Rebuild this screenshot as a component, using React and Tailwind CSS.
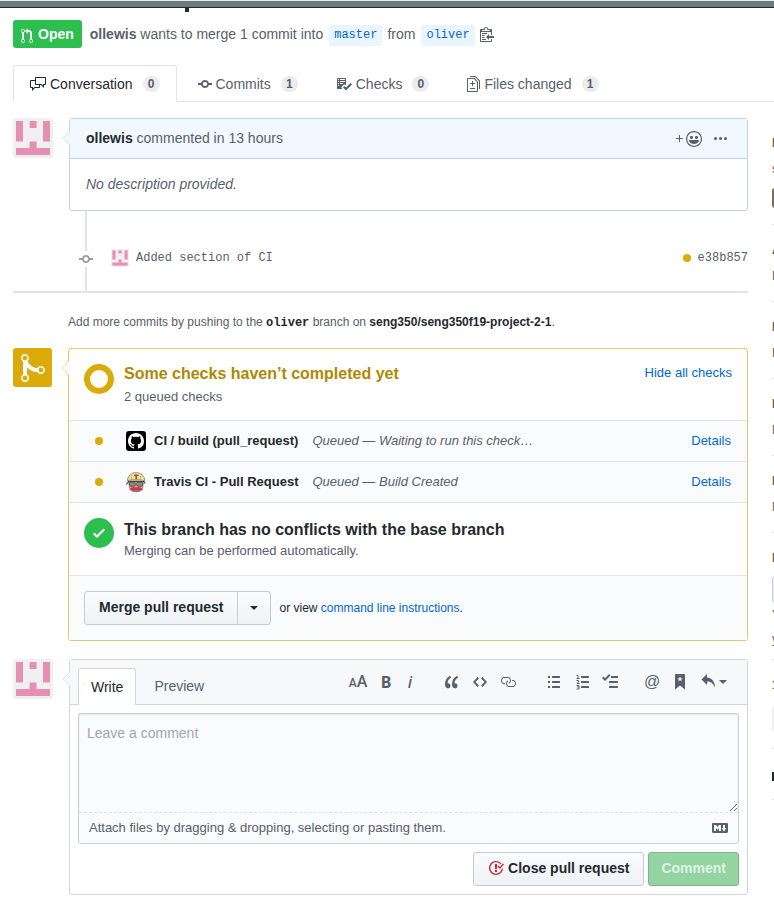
import React from "react";

const PATHS = {
  pullRequest: { w: 12, d: "M11 11.28V5c-.03-.78-.34-1.47-.94-2.06C9.46 2.35 8.78 2.03 8 2H7V0L4 3l3 3V4h1c.27.02.48.11.69.31.21.2.3.42.31.69v6.28A1.993 1.993 0 0 0 10 15a1.993 1.993 0 0 0 1-3.72zm-1 2.92c-.66 0-1.2-.55-1.2-1.2 0-.65.55-1.2 1.2-1.2.65 0 1.2.55 1.2 1.2 0 .65-.55 1.2-1.2 1.2zM4 3c0-1.11-.89-2-2-2a1.993 1.993 0 0 0-1 3.72v6.56A1.993 1.993 0 0 0 2 15a1.993 1.993 0 0 0 1-3.72V4.72c.59-.34 1-.98 1-1.72zm-.8 10c0 .66-.55 1.2-1.2 1.2-.65 0-1.2-.55-1.2-1.2 0-.65.55-1.2 1.2-1.2.65 0 1.2.55 1.2 1.2zM2 4.2C1.34 4.2.8 3.65.8 3c0-.65.55-1.2 1.2-1.2.65 0 1.2.55 1.2 1.2 0 .65-.55 1.2-1.2 1.2z" },
  commit: { w: 14, d: "M10.86 7c-.45-1.72-2-3-3.86-3-1.86 0-3.41 1.28-3.86 3H0v2h3.14c.45 1.72 2 3 3.86 3 1.86 0 3.41-1.28 3.86-3H14V7h-3.14zM7 10.2c-1.22 0-2.2-.98-2.2-2.2 0-1.22.98-2.2 2.2-2.2 1.22 0 2.2.98 2.2 2.2 0 1.22-.98 2.2-2.2 2.2z" },
  discussion: { w: 16, d: "M15 1H6c-.55 0-1 .45-1 1v2H1c-.55 0-1 .45-1 1v6c0 .55.45 1 1 1h1v3l3-3h4c.55 0 1-.45 1-1V9h1l3 3V9h1c.55 0 1-.45 1-1V2c0-.55-.45-1-1-1zM9 11H4.5L3 12.5V11H1V5h4v3c0 .55.45 1 1 1h3v2zm6-3h-2v1.5L11.5 8H6V2h9v6z" },
  checklist: { w: 16, d: "M16 8.5l-6 6-3-3L8.5 10l1.5 1.5L14.5 7 16 8.5zM5.7 12.2l.8.8H2c-.55 0-1-.45-1-1V3c0-.55.45-1 1-1h7c.55 0 1 .45 1 1v6.5l-.8-.8c-.39-.39-1.03-.39-1.42 0L5.7 10.8a.996.996 0 0 0 0 1.41v-.01zM4 4h5V3H4v1zm0 2h5V5H4v1zm0 2h3V7H4v1zM3 9H2v1h1V9zm0-2H2v1h1V7zm0-2H2v1h1V5zm0-2H2v1h1V3z" },
  diff: { w: 13, d: "M6 7h2v1H6v2H5V8H3V7h2V5h1v2zm-3 6h5v-1H3v1zM7.5 2L11 5.5V15c0 .55-.45 1-1 1H1c-.55 0-1-.45-1-1V3c0-.55.45-1 1-1h6.5zM10 6L7 3H1v12h9V6zM8.5 0H3v1h5l4 4v8h1V4.5L8.5 0z" },
  clippy: { w: 14, d: "M2 13h4v1H2v-1zm5-6H2v1h5V7zm2 3V8l-3 3 3 3v-2h5v-2H9zM4.5 9H2v1h2.5V9zM2 12h2.5v-1H2v1zm9 1h1v2c-.02.28-.11.52-.3.7-.19.18-.42.28-.7.3H1c-.55 0-1-.45-1-1V4c0-.55.45-1 1-1h3c0-1.11.89-2 2-2 1.11 0 2 .89 2 2h3c.55 0 1 .45 1 1v5h-1V6H1v9h10v-2zM2 5h8c0-.55-.45-1-1-1H8c-.55 0-1-.45-1-1s-.45-1-1-1-1 .45-1 1-.45 1-1 1H3c-.55 0-1 .45-1 1z" },
  plus: { w: 7, d: "M4 4H3v3H0v1h3v3h1V8h3V7H4V4z" },
  smiley: { w: 16, d: "M8 0C3.58 0 0 3.58 0 8s3.58 8 8 8 8-3.58 8-8-3.58-8-8-8zm4.81 12.81a6.72 6.72 0 0 1-2.17 1.45c-.83.36-1.72.53-2.64.53-.92 0-1.81-.17-2.64-.53-.81-.34-1.55-.83-2.17-1.45a6.773 6.773 0 0 1-1.45-2.17A6.59 6.59 0 0 1 1.21 8c0-.92.17-1.81.53-2.64.34-.81.83-1.55 1.45-2.17.62-.62 1.36-1.11 2.17-1.45A6.59 6.59 0 0 1 8 1.21c.92 0 1.81.17 2.64.53.81.34 1.55.83 2.17 1.45.62.62 1.11 1.36 1.45 2.17.36.83.53 1.72.53 2.64 0 .92-.17 1.81-.53 2.64-.34.81-.83 1.55-1.45 2.17zM4 6.8v-.59c0-.66.53-1.19 1.2-1.19h.59c.66 0 1.19.53 1.19 1.19v.59c0 .67-.53 1.2-1.19 1.2H5.2C4.53 8 4 7.47 4 6.8zm5 0v-.59c0-.66.53-1.19 1.2-1.19h.59c.66 0 1.19.53 1.19 1.19v.59c0 .67-.53 1.2-1.19 1.2h-.59C9.53 8 9 7.47 9 6.8zm4 3.2c-.72 1.88-2.91 3-5 3s-4.28-1.13-5-3c-.14-.39.23-1 .66-1h8.59c.41 0 .89.61.75 1z" },
  kebab: { w: 13, d: "M1.5 9a1.5 1.5 0 1 0 0-3 1.5 1.5 0 0 0 0 3zm5 0a1.5 1.5 0 1 0 0-3 1.5 1.5 0 0 0 0 3zM13 7.5a1.5 1.5 0 1 1-3 0 1.5 1.5 0 0 1 3 0z" },
  merge: { w: 12, d: "M10 7c-.73 0-1.38.41-1.73 1.02V8C7.22 7.98 6 7.64 5.14 6.98c-.75-.58-1.5-1.61-1.89-2.44A1.993 1.993 0 0 0 2 .99C.89.99 0 1.89 0 3a2 2 0 0 0 1 1.72v6.56c-.59.35-1 .99-1 1.72 0 1.11.89 2 2 2a1.993 1.993 0 0 0 1-3.72V7.67c.67.7 1.44 1.27 2.3 1.69.86.42 2.03.63 2.97.64v-.02c.36.61 1 1.02 1.73 1.02 1.11 0 2-.89 2-2 0-1.11-.89-2-2-2zm-6.8 6c0 .66-.55 1.2-1.2 1.2-.65 0-1.2-.55-1.2-1.2 0-.65.55-1.2 1.2-1.2.65 0 1.2.55 1.2 1.2zM2 4.2C1.34 4.2.8 3.65.8 3c0-.65.55-1.2 1.2-1.2.65 0 1.2.55 1.2 1.2 0 .65-.55 1.2-1.2 1.2zm8 6c-.66 0-1.2-.55-1.2-1.2 0-.65.55-1.2 1.2-1.2.65 0 1.2.55 1.2 1.2 0 .65-.55 1.2-1.2 1.2z" },
  check: { w: 12, d: "M12 5l-8 8-4-4 1.5-1.5L4 10l6.5-6.5L12 5z" },
  github: { w: 16, d: "M8 0C3.58 0 0 3.58 0 8c0 3.54 2.29 6.53 5.47 7.59.4.07.55-.17.55-.38 0-.19-.01-.82-.01-1.49-2.01.37-2.53-.49-2.69-.94-.09-.23-.48-.94-.82-1.13-.28-.15-.68-.52-.01-.53.63-.01 1.08.58 1.23.82.72 1.21 1.87.87 2.33.66.07-.52.28-.87.51-1.07-1.78-.2-3.64-.89-3.64-3.95 0-.87.31-1.59.82-2.15-.08-.2-.36-1.02.08-2.12 0 0 .67-.21 2.2.82.64-.18 1.32-.27 2-.27.68 0 1.36.09 2 .27 1.53-1.04 2.2-.82 2.2-.82.44 1.1.16 1.92.08 2.12.51.56.82 1.27.82 2.15 0 3.07-1.87 3.75-3.65 3.95.29.25.54.73.54 1.48 0 1.07-.01 1.93-.01 2.2 0 .21.15.46.55.38A8.013 8.013 0 0 0 16 8c0-4.42-3.58-8-8-8z" },
  quote: { w: 14, d: "M6.16 3.5C3.73 5.06 2.55 6.67 2.55 9.36c.16-.05.3-.05.44-.05 1.27 0 2.5.86 2.5 2.41 0 1.61-1.03 2.61-2.5 2.61-1.9 0-2.99-1.52-2.99-4.25 0-3.8 1.75-6.53 5.02-8.42L6.16 3.5zm7 0c-2.43 1.56-3.61 3.17-3.61 5.86.16-.05.3-.05.44-.05 1.27 0 2.5.86 2.5 2.41 0 1.61-1.03 2.61-2.5 2.61-1.89 0-2.98-1.52-2.98-4.25 0-3.8 1.75-6.53 5.02-8.42l1.14 1.84h-.01z" },
  code: { w: 14, d: "M9.5 3L8 4.5 11.5 8 8 11.5 9.5 13 14 8 9.5 3zm-5 0L0 8l4.5 5L6 11.5 2.5 8 6 4.5 4.5 3z" },
  link: { w: 16, d: "M4 9h1v1H4c-1.5 0-3-1.69-3-3.5S2.55 3 4 3h4c1.45 0 3 1.69 3 3.5 0 1.41-.91 2.72-2 3.25V8.59c.58-.45 1-1.27 1-2.09C10 5.22 8.98 4 8 4H4c-.98 0-2 1.22-2 2.5S3 9 4 9zm9-3h-1v1h1c1 0 2 1.22 2 2.5S13.98 12 13 12H9c-.98 0-2-1.22-2-2.5 0-.83.42-1.64 1-2.09V6.25c-1.09.53-2 1.84-2 3.25C6 11.31 7.55 13 9 13h4c1.45 0 3-1.69 3-3.5S14.5 6 13 6z" },
  list: { w: 12, d: "M0 2h2v2H0zM0 7h2v2H0zM0 12h2v2H0zM4.5 2h7q.5 0 .5.5v1q0 .5-.5.5h-7q-.5 0-.5-.5v-1q0-.5.5-.5zM4.5 7h7q.5 0 .5.5v1q0 .5-.5.5h-7q-.5 0-.5-.5v-1q0-.5.5-.5zM4.5 12h7q.5 0 .5.5v1q0 .5-.5.5h-7q-.5 0-.5-.5v-1q0-.5.5-.5z" },
  tasklist: { w: 16, d: "M15.41 9H7.59C7 9 7 8.59 7 8c0-.59 0-1 .59-1h7.81c.59 0 .59.41.59 1 0 .59 0 1-.59 1h.01zM9.59 4C9 4 9 3.59 9 3c0-.59 0-1 .59-1h5.81c.59 0 .59.41.59 1 0 .59 0 1-.59 1H9.59zM0 3.91l1.41-1.3L3 4.2 7.09 0 8.5 1.41 3 6.91l-3-3zM7.59 12h7.81c.59 0 .59.41.59 1 0 .59 0 1-.59 1H7.59C7 14 7 13.59 7 13c0-.59 0-1 .59-1z" },
  saved: { w: 10, d: "M.5 0h9q.5 0 .5.5V15.5L5 11.5 0 15.5V.5Q0 0 .5 0zM5 2.2L4.3 4.2H2.2L3.900 5.400 3.200 7.500 5 6.200l1.800 1.300-.7-2.100 1.700-1.200H5.700z" },
  reply: { w: 14, d: "M6 3.5c3.92.44 8 3.125 8 10-2.312-5.062-4.75-6-8-6V11L.5 5.5 6 0v3.5z" },
  closed: { w: 16, d: "M7 10h2v2H7v-2zm2-6H7v5h2V4zm1.5 1.5l-1 1L12 9l4-4.5-1-1L12 7l-1.5-1.5zM8 13.7A5.71 5.71 0 0 1 2.3 8c0-3.14 2.56-5.7 5.7-5.7 1.83 0 3.45.88 4.5 2.2l.92-.92A6.947 6.947 0 0 0 8 1C4.14 1 1 4.14 1 8s3.14 7 7 7 7-3.14 7-7l-1.52 1.52c-.66 2.41-2.86 4.19-5.48 4.19v-.01z" },
  markdown: { w: 16, d: "M14.85 3H1.15C.52 3 0 3.52 0 4.15v7.69C0 12.48.52 13 1.15 13h13.69c.64 0 1.15-.52 1.15-1.15v-7.7C16 3.52 15.48 3 14.85 3zM9 11H7V8L5.5 9.92 4 8v3H2V5h2l1.5 2L7 5h2v6zm2.99.5L9.5 8H11V5h2v3h1.5l-2.51 3.5z" },
};

function Octicon({ name, size = 16, className = "" }) {
  const { w, d } = PATHS[name];
  return (
    <svg width={(w * size) / 16} height={size} viewBox={`0 0 ${w} 16`} fill="currentColor" fillRule="evenodd" aria-hidden="true" className={`shrink-0 ${className}`}>
      <path d={d} />
    </svg>
  );
}

function Identicon({ size = 40 }) {
  return (
    <svg width={size} height={size} viewBox="0 0 40 40" className="shrink-0" role="img" aria-label="ollewis">
      <rect width="40" height="40" rx="3" fill="#f0f0f0" />
      <g fill="#e690b1">
        <rect x="3" y="3" width="7" height="20.5" />
        <rect x="16.600" y="3" width="7" height="7" />
        <rect x="30" y="3" width="7" height="20.5" />
        <rect x="16.600" y="23.5" width="7" height="7" />
        <rect x="3" y="30" width="34" height="7" />
      </g>
    </svg>
  );
}

function TravisAvatar() {
  return (
    <svg width="20" height="20" viewBox="0 0 20 20" className="shrink-0" aria-hidden="true">
      <path d="M2.500 9h15l-.8 7-3 3.500H6.500L3.500 16z" fill="#cdb598" stroke="#6d5b4c" strokeWidth=".6" />
      <path d="M1.500 8.800C1.500 4 5.500 .6 10 .6s8.800 3.400 8.800 8.200l-3.500-.9H5z" fill="#efe3a4" stroke="#7b7048" strokeWidth=".7" />
      <path d="M5 3.500l1 4M15 3.500l-1 4" stroke="#b5a970" strokeWidth=".8" />
      <path d="M8 2.500h4.500v1.600h-1.400v3.200H9.400V4.100H8z" fill="#a8433d" />
      <path d="M.5 12.500L2.500 9.500h15.500l1.200 2" fill="none" stroke="#4a4440" strokeWidth="1.100" />
      <rect x="3.500" y="10" width="5.800" height="4.200" rx="1.500" fill="#948878" stroke="#4a4440" strokeWidth=".8" />
      <rect x="10.700" y="10" width="6" height="4.200" rx="1.500" fill="#948878" stroke="#4a4440" strokeWidth=".8" />
      <path d="M3.500 18c1-2.800 3.500-3.600 6.500-2.600 3-1 5.800-.2 7 2.600-2 1-4.500.8-7 0-2.500.8-4.500 1-6.500 0z" fill="#d93446" />
      <path d="M7 18.200h6l-.8 1.600H7.800z" fill="#77706a" />
    </svg>
  );
}

function Pointer({ fill, stroke }) {
  return (
    <svg width="8" height="14" viewBox="0 0 8 14" className="absolute -left-2 top-3" aria-hidden="true">
      <path d="M8 0L1 7l7 7" fill={fill} stroke={stroke} />
    </svg>
  );
}

function Caret() {
  return (
    <svg width="8" height="4" viewBox="0 0 8 4" fill="currentColor" className="shrink-0" aria-hidden="true">
      <path d="M0 0h8L4 4z" />
    </svg>
  );
}

function Counter({ children }) {
  return <span className="ml-[10px] flex h-4 w-[17px] items-center justify-center rounded-full bg-[#ebecee] text-xs font-bold text-[#586069]">{children}</span>;
}

function Tab({ icon, label, count, active }) {
  return (
    <a
      href="#"
      aria-current={active ? "page" : undefined}
      className={`-mb-px flex h-[37px] items-center border px-4 pt-px ${active ? "rounded-t-[3px] border-[#e1e4e8] border-b-white bg-white text-[#24292e]" : "border-transparent text-[#586069]"}`}
    >
      <Octicon name={icon} />
      <span className="ml-1">{label}</span>
      <Counter>{count}</Counter>
    </a>
  );
}

function Branch({ children }) {
  return <a href="#" className="ml-[6px] mr-[5px] mt-0.5 rounded-[3px] bg-[#eaf5ff] px-[5px] py-0.5 font-['Liberation_Mono',monospace] text-xs leading-[17px] text-[#0366d6]">{children}</a>;
}

function StatusRow({ avatar, name, status }) {
  return (
    <li className="flex h-[41px] items-center border-t border-[#e1e4e8] bg-[#fafbfc] pl-[26px] pr-4 text-[13px]">
      <span className="mr-[23px] size-2 rounded-full bg-[#dbab09]" />
      {avatar}
      <strong className="ml-2 text-[#24292e]">{name}</strong>
      <em className="ml-[14px] flex-1 text-[#586069]">{status}</em>
      <a href="#" className="text-[#0366d6]">Details</a>
    </li>
  );
}

function Tool({ label, narrow, children }) {
  return <button type="button" aria-label={label} className={`flex h-6 items-center justify-center ${narrow ? "w-5" : "w-7"}`}>{children}</button>;
}

function OrderedListIcon() {
  return (
    <svg width="13" height="16" viewBox="0 0 13 16" fill="currentColor" aria-hidden="true">
      <rect x="5" y="2" width="8" height="2" rx=".5" />
      <rect x="5" y="7" width="8" height="2" rx=".5" />
      <rect x="5" y="12" width="8" height="2" rx=".5" />
      <g fill="none" stroke="currentColor" strokeWidth="1">
        <path d="M.5 1.500H2V5M.5 4.500h3" />
        <path d="M.5 6.500h2v1.500l-1.500 1.500h2.500" />
        <path d="M.5 11.500h2.500v3.500H.5M1 13h2" />
      </g>
    </svg>
  );
}

function SideSection({ title, value, children }) {
  return (
    <section className="h-[77px] border-b border-[#e1e4e8] pt-4 text-xs leading-[18px] text-[#586069]">
      <h3 className="font-bold">{title}</h3>
      {value && <p className="mt-2">{value}</p>}
      {children}
    </section>
  );
}

export default function App() {
  return (
    <div className="overflow-hidden bg-white font-['Liberation_Sans',Arial,sans-serif] text-sm leading-5 text-[#24292e]">
      <div className="h-2 border-b border-t border-b-[#20282b] border-t-[#e8eae7] bg-[#6c7a80]" />
      <div className="ml-[185px] h-3">
        <div className="h-1 w-1 bg-[#24292e]" />
      </div>

      <header className="pl-[13px]">
        <div className="flex h-7 items-center text-[#586069]">
          <span className="mr-2 flex h-7 items-center gap-[5px] rounded-[3px] bg-[#2cbe4e] px-2 font-bold text-white">
            <Octicon name="pullRequest" className="mt-1" />
            Open
          </span>
          <p className="flex items-center whitespace-pre">
            <span><strong>ollewis</strong> wants to merge 1 commit into</span>
            <Branch>master</Branch>
            from
            <Branch>oliver</Branch>
          </p>
          <button type="button" aria-label="Copy branch name"><Octicon name="clippy" /></button>
        </div>
        <nav className="mt-[17px] flex h-[37px] gap-1 border-b border-[#e1e4e8]">
          <Tab icon="discussion" label="Conversation" count="0" active />
          <Tab icon="commit" label="Commits" count="1" />
          <Tab icon="checklist" label="Checks" count="0" />
          <Tab icon="diff" label="Files changed" count="1" />
        </nav>
      </header>

      <div className="flex gap-6 pl-[13px] pt-4">
        <main className="min-w-0 flex-1">
          <div className="flex items-start gap-4">
            <Identicon />
            <article className="relative flex-1 rounded-[3px] border border-[#c0d3eb]">
              <Pointer fill="#f1f8ff" stroke="#d3e0f0" />
              <header className="flex h-10 items-center border-b border-[#c0d3eb] bg-[#f1f8ff] px-4 text-[#586069]">
                <p className="flex-1 pb-0.5"><strong className="text-[#24292e]">ollewis</strong> commented in 13 hours</p>
                <button type="button" aria-label="Add your reaction" className="mr-3 flex items-center gap-[3px]">
                  <Octicon name="plus" />
                  <Octicon name="smiley" />
                </button>
                <button type="button" aria-label="More options" className="mr-1"><Octicon name="kebab" /></button>
              </header>
              <p className="px-4 pb-4 pt-[15px] italic text-[#586069]">No description provided.</p>
            </article>
          </div>

          <div className="flex h-20 items-stretch pl-[66px]">
            <div className="flex w-[14px] flex-col items-center text-[#959da5]">
              <span className="w-0.5 flex-1 bg-[#e1e4e8]" />
              <Octicon name="commit" />
              <span className="h-6 w-0.5 bg-[#e1e4e8]" />
            </div>
            <div className="ml-[18px] flex flex-1 items-center gap-[7px] pt-3.5 font-['Liberation_Mono',monospace] text-xs text-[#586069]">
              <Identicon size={18} />
              <span className="flex-1">Added section of CI</span>
              <span className="size-2 rounded-full bg-[#dbab09]" />
              <a href="#">e38b857</a>
            </div>
          </div>
          <div className="h-0.5 bg-[#e1e4e8]" />

          <p className="ml-[55px] mt-[19px] text-xs leading-5 text-[#586069]">
            Add more commits by pushing to the <strong className="font-['Liberation_Mono',monospace] text-[#24292e]">oliver</strong> branch on <strong className="text-[#24292e]">seng350/seng350f19-project-2-1</strong>.
          </p>

          <div className="mt-[15px] flex items-start gap-4">
            <div className="flex size-[39px] items-center justify-center rounded-[3px] bg-[#dbab09] text-white">
              <Octicon name="merge" size={32} />
            </div>
            <section className="relative flex-1 rounded-[3px] border border-[#e2cb6c]">
              <Pointer fill="#ffffff" stroke="#ecdca0" />
              <div className="flex h-[71px] items-start px-[15px] pt-[15px]">
                <span className="size-[30px] shrink-0 rounded-full border-[6px] border-[#dbab09]" />
                <div className="ml-[10px] flex-1">
                  <h2 className="text-base font-bold leading-5 text-[#b08800]">Some checks haven’t completed yet</h2>
                  <p className="mt-[3px] text-[13px] text-[#586069]">2 queued checks</p>
                </div>
                <button type="button" className="text-[13px] leading-[18px] text-[#0366d6]">Hide all checks</button>
              </div>
              <ul>
                <StatusRow
                  avatar={<span className="flex size-5 items-center justify-center rounded-[3px] bg-black text-white"><Octicon name="github" /></span>}
                  name="CI / build (pull_request)"
                  status="Queued — Waiting to run this check…"
                />
                <StatusRow avatar={<TravisAvatar />} name="Travis CI - Pull Request" status="Queued — Build Created" />
              </ul>
              <div className="flex h-[73px] items-start border-t border-[#e1e4e8] px-[15px] pt-[15px]">
                <span className="flex size-[30px] shrink-0 items-center justify-center rounded-full bg-[#2cbe4e] text-white"><Octicon name="check" /></span>
                <div className="ml-[10px]">
                  <h2 className="text-base font-bold leading-6">This branch has no conflicts with the base branch</h2>
                  <p className="text-[13px] leading-[18px] text-[#586069]">Merging can be performed automatically.</p>
                </div>
              </div>
              <div className="flex h-[65px] items-center border-t border-[#e1e4e8] bg-[#fafbfc] px-[15px]">
                <div className="flex h-[34px] rounded-[3px] border border-[#c6cbcf] bg-linear-to-b from-[#fafbfc] to-[#eff3f6]">
                  <button type="button" className="px-[14px] pb-0.5 font-bold">Merge pull request</button>
                  <button type="button" aria-label="Select merge method" className="flex w-[33px] items-center justify-center border-l border-[#c6cbcf]"><Caret /></button>
                </div>
                <p className="ml-2 text-xs">or view <a href="#" className="text-[#0366d6]">command line instructions</a>.</p>
              </div>
            </section>
          </div>

          <div className="mt-[18px] flex items-start gap-4">
            <Identicon />
            <form className="relative flex-1 rounded-[3px] border border-[#d1d5da]" onSubmit={(e) => e.preventDefault()}>
              <Pointer fill="#f6f8fa" stroke="#dfe2e6" />
              <div className="flex h-[45px] items-center border-b border-[#d1d5da] bg-[#f6f8fa] pl-2 pr-[13px] text-[#586069]">
                <button type="button" className="-mb-px h-[37px] self-end rounded-t-[3px] border border-b-0 border-[#d1d5da] bg-white px-3 text-[#24292e]">Write</button>
                <button type="button" className="mt-2 px-[18px] py-2">Preview</button>
                <div className="ml-auto flex gap-[18px]">
                  <div className="flex font-['Noto_Sans',sans-serif] text-base font-bold">
                    <Tool label="Heading"><span className="font-['Roboto',sans-serif] font-medium"><span className="text-xs">A</span>A</span></Tool>
                    <Tool label="Bold">B</Tool>
                    <Tool label="Italic" narrow><span className="font-medium italic">i</span></Tool>
                  </div>
                  <div className="flex">
                    <Tool label="Quote"><Octicon name="quote" /></Tool>
                    <Tool label="Code"><Octicon name="code" /></Tool>
                    <Tool label="Link"><Octicon name="link" /></Tool>
                  </div>
                  <div className="-mr-1 flex">
                    <Tool label="Bulleted list"><Octicon name="list" /></Tool>
                    <Tool label="Numbered list"><OrderedListIcon /></Tool>
                    <Tool label="Task list"><Octicon name="tasklist" /></Tool>
                  </div>
                  <div className="flex">
                    <Tool label="Mention"><span className="text-base">@</span></Tool>
                    <Tool label="Saved reply"><Octicon name="saved" /></Tool>
                    <button type="button" aria-label="Reply" className="flex h-6 w-10 items-center justify-center gap-1"><Octicon name="reply" /><Caret /></button>
                  </div>
                </div>
              </div>
              <div className="p-2">
                <div className="rounded-[3px] border border-[#c9ced6] bg-[#fafbfc]">
                  <textarea aria-label="Leave a comment" placeholder="Leave a comment" className="block h-[98px] w-full resize-y px-2 py-[9px] shadow-[inset_0_1px_2px_rgba(27,31,35,0.08)] outline-none placeholder:text-[#a3a6aa]" />
                  <div className="flex h-[31px] items-center justify-between border-t border-dashed border-[#dfe2e5] px-[10px] text-[13px] text-[#586069]">
                    <span>Attach files by dragging &amp; dropping, selecting or pasting them.</span>
                    <Octicon name="markdown" />
                  </div>
                </div>
                <div className="mt-2 flex justify-end gap-1">
                  <button type="button" className="flex h-[34px] items-center gap-1 rounded-[3px] border border-[#c6cbcf] bg-linear-to-b from-[#fafbfc] to-[#eff3f6] px-[14px] pb-0.5 font-bold">
                    <Octicon name="closed" className="text-[#cb2431]" />
                    Close pull request
                  </button>
                  <button type="submit" disabled className="h-[34px] rounded-[3px] border border-[#7fb68c] bg-[#94d3a2] px-3 pb-0.5 font-bold text-[#dff2e3]">Comment</button>
                </div>
              </div>
            </form>
          </div>
        </main>

        <aside className="w-0.5 shrink-0 overflow-hidden whitespace-nowrap">
          <section className="h-[107px] border-b border-[#e1e4e8] pt-4 text-xs leading-[18px] text-[#586069]">
            <h3 className="font-bold">Reviewers</h3>
            <p className="mt-2">suggestions</p>
            <div className="mt-[10px] h-5 w-5 rounded-[3px] bg-[#75715f]" />
          </section>
          <SideSection title="Assignees" value="No one assigned" />
          <SideSection title="Labels" value="None yet" />
          <SideSection title="Projects" value="None yet" />
          <SideSection title="Milestone" value="No milestone" />
          <section className="h-[127px] border-b border-[#e1e4e8] pt-4 text-xs leading-[18px] text-[#586069]">
            <h3 className="font-bold">Notifications</h3>
            <button type="button" className="mt-[9px] block h-[27px] w-40 rounded-[3px] border border-[#c6cbcf] bg-[#eff3f6]" aria-label="Unsubscribe" />
            <p className="leading-6">You’re receiving</p>
            <p className="leading-6">your notifications</p>
          </section>
          <section className="h-[89px] border-b border-[#e1e4e8] pt-4 text-xs leading-[18px] text-[#586069]">
            <h3 className="font-bold">1 participant</h3>
            <div className="mt-3 h-[26px] w-[26px] rounded-[3px] bg-[#f0f0f0]" />
          </section>
          <div className="h-[51px] border-b border-[#e1e4e8] pt-[23px]">
            <div className="h-[9px] w-3 bg-[#24292e]" />
          </div>
        </aside>
      </div>
    </div>
  );
}
